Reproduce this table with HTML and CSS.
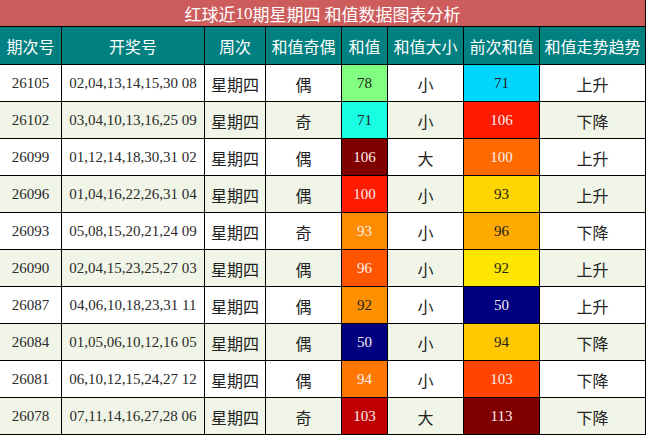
FILE: index.html
```html
<!DOCTYPE html>
<html lang="zh">
<head>
<meta charset="utf-8">
<title>红球近10期星期四 和值数据图表分析</title>
<link rel="stylesheet" href="styles.css">
</head>
<body>
<div class="board">
  <div class="title">红球近<span class="num">10</span>期星期四 和值数据图表分析</div>
  <div class="row head">
    <div>期次号</div><div>开奖号</div><div>周次</div><div>和值奇偶</div><div>和值</div><div>和值大小</div><div>前次和值</div><div>和值走势趋势</div>
  </div>
  <div class="row">
    <div class="num">26105</div><div class="num">02,04,13,14,15,30 08</div><div>星期四</div><div>偶</div><div class="num v c-78">78</div><div>小</div><div class="num v c-71a">71</div><div>上升</div>
  </div>
  <div class="row alt">
    <div class="num">26102</div><div class="num">03,04,10,13,16,25 09</div><div>星期四</div><div>奇</div><div class="num v c-71b">71</div><div>小</div><div class="num v light c-106a">106</div><div>下降</div>
  </div>
  <div class="row">
    <div class="num">26099</div><div class="num">01,12,14,18,30,31 02</div><div>星期四</div><div>偶</div><div class="num v light c-maroon">106</div><div>大</div><div class="num v light c-100a">100</div><div>上升</div>
  </div>
  <div class="row alt">
    <div class="num">26096</div><div class="num">01,04,16,22,26,31 04</div><div>星期四</div><div>偶</div><div class="num v light c-106a">100</div><div>小</div><div class="num v c-93">93</div><div>上升</div>
  </div>
  <div class="row">
    <div class="num">26093</div><div class="num">05,08,15,20,21,24 09</div><div>星期四</div><div>奇</div><div class="num v light c-93o">93</div><div>小</div><div class="num v c-96">96</div><div>下降</div>
  </div>
  <div class="row alt">
    <div class="num">26090</div><div class="num">02,04,15,23,25,27 03</div><div>星期四</div><div>偶</div><div class="num v light c-96o">96</div><div>小</div><div class="num v c-92">92</div><div>上升</div>
  </div>
  <div class="row">
    <div class="num">26087</div><div class="num">04,06,10,18,23,31 11</div><div>星期四</div><div>偶</div><div class="num v c-92o">92</div><div>小</div><div class="num v light c-navy">50</div><div>上升</div>
  </div>
  <div class="row alt">
    <div class="num">26084</div><div class="num">01,05,06,10,12,16 05</div><div>星期四</div><div>偶</div><div class="num v light c-navy">50</div><div>小</div><div class="num v c-94">94</div><div>下降</div>
  </div>
  <div class="row">
    <div class="num">26081</div><div class="num">06,10,12,15,24,27 12</div><div>星期四</div><div>偶</div><div class="num v light c-94o">94</div><div>小</div><div class="num v light c-103">103</div><div>下降</div>
  </div>
  <div class="row alt">
    <div class="num">26078</div><div class="num">07,11,14,16,27,28 06</div><div>星期四</div><div>奇</div><div class="num v light c-103r">103</div><div>大</div><div class="num v light c-maroon">113</div><div>下降</div>
  </div>
</div>
</body>
</html>
```

FILE: styles.css
```css
html, body {
  margin: 0;
  padding: 0;
  background: #fff;
}

.board {
  width: 645px;
  height: 434px;
  padding: 0 1px 1px 0;
  background: #000;
  display: flex;
  flex-direction: column;
  gap: 1px;
  font-family: "Noto Sans CJK SC", "Noto Sans", sans-serif;
  color: #222;
}

.title {
  height: 26px;
  background: #cd5c5c;
  color: #fff;
  font-size: 17px;
  display: flex;
  align-items: center;
  justify-content: center;
  line-height: 1;
}

.title .num {
  font-family: "Liberation Serif", serif;
  font-size: 17px;
}

.row {
  display: grid;
  grid-template-columns: 61px 142px 60px 75px 45px 75px 75px 105px;
  gap: 1px;
  height: 36px;
}

.row > div {
  background: #fff;
  display: flex;
  align-items: center;
  justify-content: center;
  font-size: 16px;
  line-height: 1;
  padding-top: 1px;
}

.row.alt > div {
  background: #f0f5e8;
}

.row.head {
  height: 37px;
}

.row.head > div {
  background: #008080;
  color: #fff;
  font-size: 16px;
}

.row > .num {
  font-family: "Liberation Serif", serif;
  font-size: 15px;
  color: #2a2a2a;
}

.row > .v {
  font-size: 15px;
  color: #222;
}

.row > .v.light {
  color: #fbeeee;
}

.row > div.c-78 { background: #80ff80; }
.row > div.c-71a { background: #00d7ff; }
.row > div.c-71b { background: #19ffe2; }
.row > div.c-106a { background: #ff1a00; }
.row > div.c-maroon { background: #800000; }
.row > div.c-100a { background: #ff6a00; }
.row > div.c-93 { background: #ffd700; }
.row > div.c-93o { background: #ff8c00; }
.row > div.c-96 { background: #ffaa00; }
.row > div.c-96o { background: #ff5500; }
.row > div.c-92 { background: #ffe600; }
.row > div.c-92o { background: #ff9100; }
.row > div.c-navy { background: #000080; }
.row > div.c-94 { background: #ffc800; }
.row > div.c-94o { background: #ff7700; }
.row > div.c-103 { background: #ff4500; }
.row > div.c-103r { background: #c00000; }
```
